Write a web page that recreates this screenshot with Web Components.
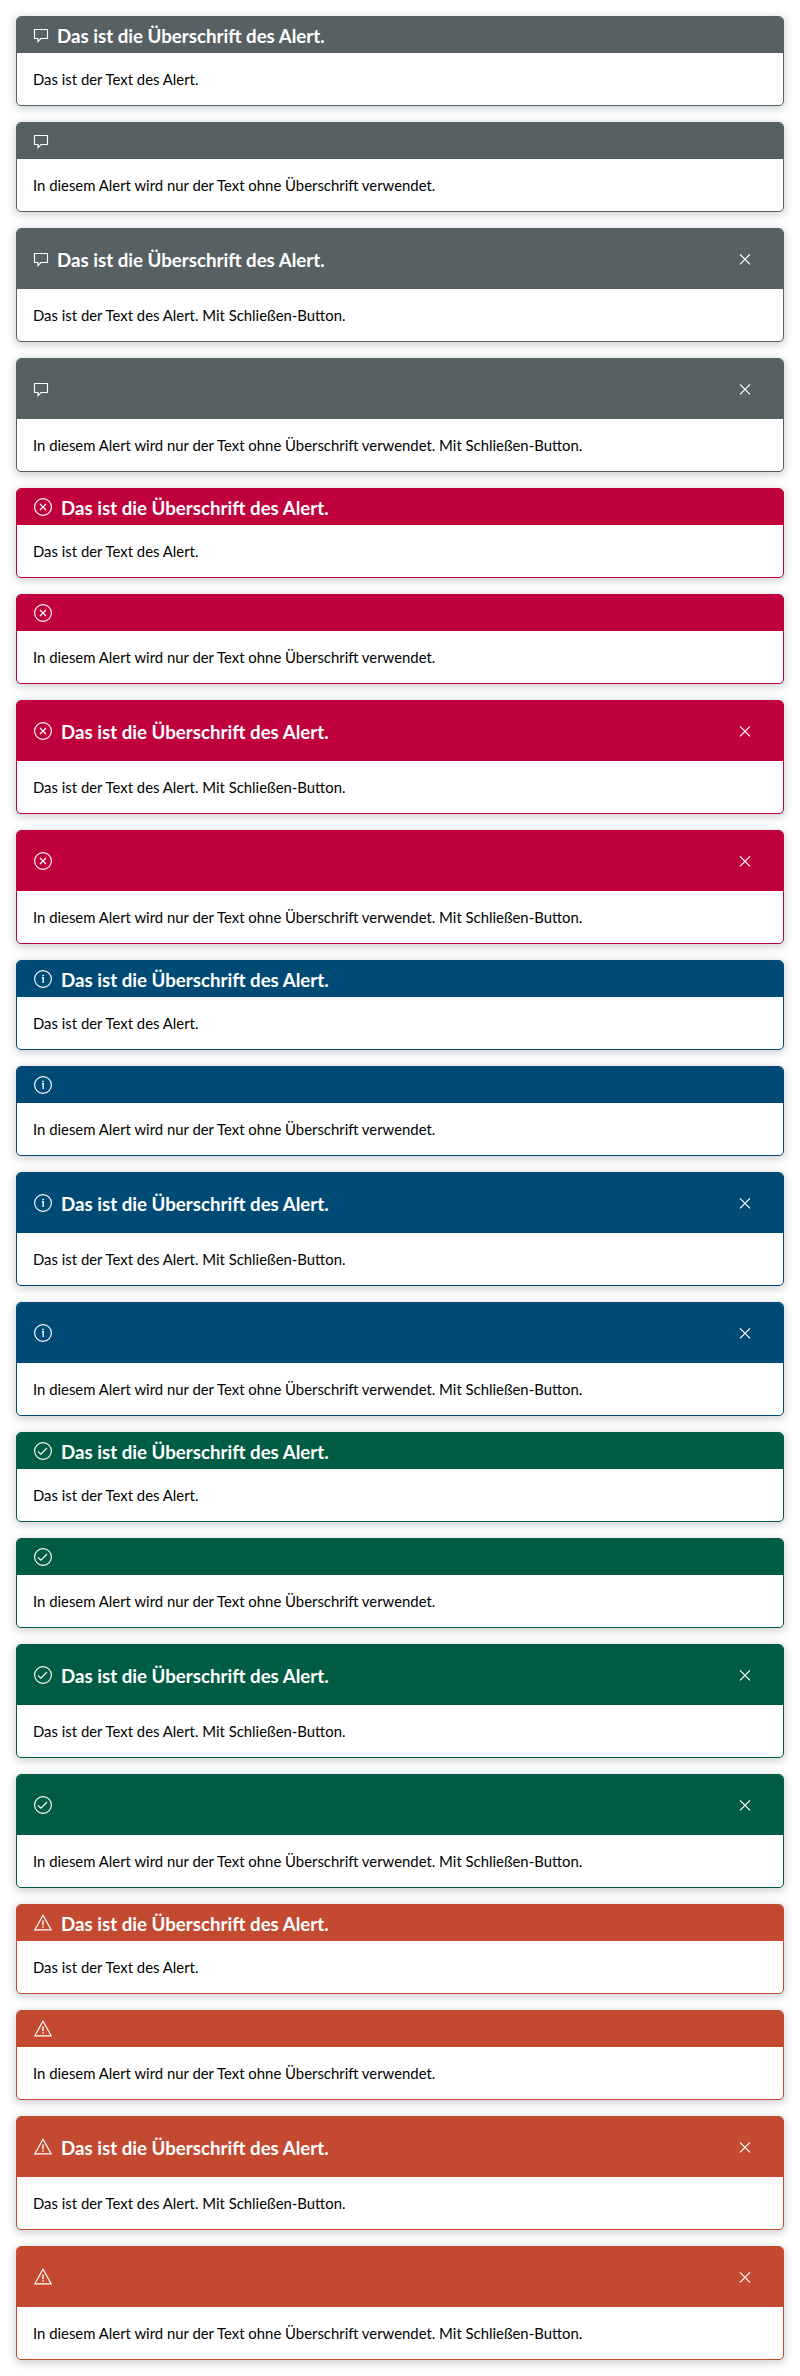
<!DOCTYPE html>
<html lang="de">
<head>
<meta charset="utf-8">
<title>Alert</title>
<style>body{margin:0;background:#fff}</style>
</head>
<body>
<alert-list></alert-list>
<script>
const ICONS = {
  default: ['16', '<path d="M1.5 3.5h13v9H8L5 15.6V12.5H1.5z"/>'],
  error: ['20', '<circle cx="10" cy="9" r="8.4"/><path d="M7 6l6 6M13 6l-6 6"/>'],
  info: ['20', '<circle cx="10" cy="9" r="8.4"/><path d="M9 7.7h1.2v5.3" stroke-width="1.4"/><path d="M10.1 4.8v1.5" stroke-width="1.6"/>'],
  success: ['20', '<circle cx="10" cy="9" r="8.4"/><path d="M4.9 9.3l3 2.9L14 6"/>'],
  warning: ['20', '<path d="M10 1.2L18.2 15.9H1.8z"/><path d="M10 6.5v4.7M10 12.3v1.5" stroke-width="1.4"/>']
};

class AlertIcon extends HTMLElement {
  connectedCallback() {
    const [width, shape] = ICONS[this.getAttribute('type')];
    this.attachShadow({ mode: 'open' }).innerHTML = `
      <style>
        :host { display: block; flex: none; height: 18px }
        svg { display: block; fill: none; stroke: #fff; stroke-width: 1.15 }
      </style>
      <svg width="${width}" height="18" viewBox="0 0 ${width} 18" aria-hidden="true">${shape}</svg>`;
  }
}
customElements.define('alert-icon', AlertIcon);

class CloseButton extends HTMLElement {
  connectedCallback() {
    this.attachShadow({ mode: 'open' }).innerHTML = `
      <style>
        :host { display: block; flex: none }
        button { display: grid; place-items: center; width: 44px; height: 44px; margin: 0; padding: 0; border: 0; background: none; cursor: pointer }
        svg { display: block; fill: none; stroke: #fff; stroke-width: 1.2 }
      </style>
      <button type="button" aria-label="Schließen"><svg width="12" height="12"><path d="M1 1.3l10 10M11 1.3L1 11.3"/></svg></button>`;
  }
}
customElements.define('close-button', CloseButton);

const COLORS = { default: '#576164', error: '#c0003c', info: '#004b76', success: '#005c45', warning: '#c44931' };

class AlertCard extends HTMLElement {
  connectedCallback() {
    const type = this.getAttribute('type');
    const closer = this.hasAttribute('closable');
    this.attachShadow({ mode: 'open' }).innerHTML = `
      <style>
        :host { display: block; box-sizing: border-box; border: 1px solid ${COLORS[type]}; border-radius: 5px; background: #fff; overflow: hidden;
          box-shadow: 0 2px 8px 1px rgba(8, 23, 45, .2) }
        header { display: flex; align-items: center; gap: 8px; box-sizing: border-box; height: ${closer ? 60 : 36}px; padding: 0 16px; background: ${COLORS[type]} }
        .title { flex: 1; padding-top: 1px; color: #fff; font-size: 18.7px; font-weight: 700; line-height: 24px }
        .text { padding: 16px; color: #000; font-size: 14.88px; line-height: 20px }
      </style>
      <header>
        <alert-icon type="${type}"></alert-icon>
        <div class="title"><slot name="title"></slot></div>
        ${closer ? '<close-button></close-button>' : ''}
      </header>
      <div class="text"><slot></slot></div>`;
  }
}
customElements.define('alert-card', AlertCard);

class AlertList extends HTMLElement {
  connectedCallback() {
    const title = '<span slot="title">Das ist die Überschrift des Alert.</span>';
    const withTitle = 'Das ist der Text des Alert.';
    const textOnly = 'In diesem Alert wird nur der Text ohne Überschrift verwendet.';
    const close = ' Mit Schließen-Button.';
    this.attachShadow({ mode: 'open' }).innerHTML = `
      <style>
        :host { display: grid; gap: 16px; padding: 16px; font-family: Lato, "Open Sans", sans-serif }
      </style>` + Object.keys(COLORS).map(type => `
      <alert-card type="${type}">${title}${withTitle}</alert-card>
      <alert-card type="${type}">${textOnly}</alert-card>
      <alert-card type="${type}" closable>${title}${withTitle}${close}</alert-card>
      <alert-card type="${type}" closable>${textOnly}${close}</alert-card>`).join('');
  }
}
customElements.define('alert-list', AlertList);
</script>
</body>
</html>
